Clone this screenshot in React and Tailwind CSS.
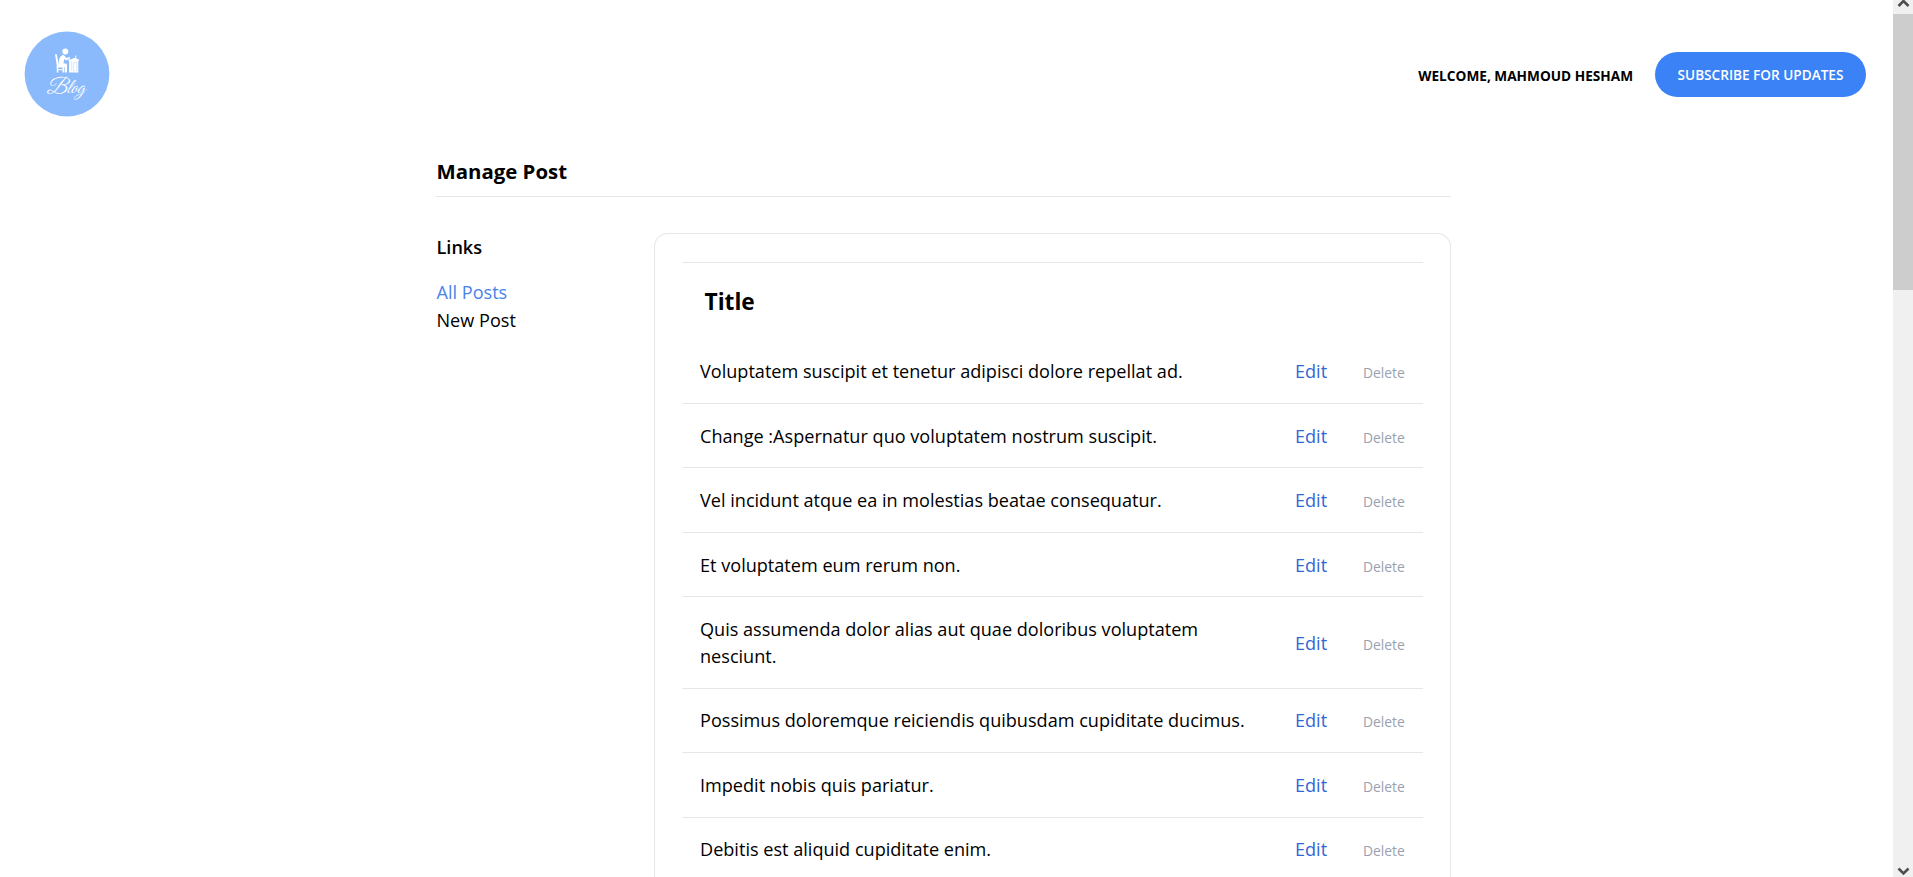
import React from "react";

const posts = [
  { title: "Voluptatem suscipit et tenetur adipisci dolore repellat ad.", height: "h-[65px]" },
  { title: "Change :Aspernatur quo voluptatem nostrum suscipit.", height: "h-[64px] pt-0.5" },
  { title: "Vel incidunt atque ea in molestias beatae consequatur.", height: "h-[65px]" },
  { title: "Et voluptatem eum rerum non.", height: "h-[64px] pt-0.5" },
  { title: "Quis assumenda dolor alias aut quae doloribus voluptatem nesciunt.", height: "h-[92px]", actions: "pt-0.5" },
  { title: "Possimus doloremque reiciendis quibusdam cupiditate ducimus.", height: "h-[64px]" },
  { title: "Impedit nobis quis pariatur.", height: "h-[65px]" },
  { title: "Debitis est aliquid cupiditate enim.", height: "h-[64px]" },
];

function Logo() {
  return (
    <svg className="block size-[86px]" viewBox="0 0 86 86" role="img" aria-label="Blog">
      <circle cx="43" cy="43" r="42.4" fill="#8bbafc" />
      <g fill="#fff">
        <circle cx="41.3" cy="20.6" r="3" />
        <path d="M38.3 24.2c-2.4 1-3.5 4-3.6 9.3 0 1.700.8 2.600 2.400 2.600h3.500v5.400h2.400v-7.400c0-1-.6-1.600-1.500-1.600h-2l.6-4.600 2.100 1.600 4-2.600-.7-1.200-2.900 1.500-2.200-2.500c-.6-.7-1.300-.8-2.100-.5z" />
        <path d="M31 23.200h1.700l2.300 11.400h-2.200zM32.600 34.600h7.400v2h-7.400zM32.800 36h1.500v5.600h-1.500zM38.500 36H40v5.600h-1.500zM33.500 38.300h5.500v1h-5.500z" />
        <path d="M44.300 28.200h10.800v1.500h-.8v11.900h-9.200V29.700h-.8zM51.300 24.500h1v3.700h-1zM48.700 27h4v1.200h-4z" />
      </g>
      <path d="M46.200 31.200h1.500v9M49.500 31.500h3.400v8.500h-3.400z" fill="none" stroke="#b8d5fd" strokeWidth=".5" />
      <text
        x="22.5"
        y="61.5"
        fill="#fff"
        fontFamily="'Z003', 'URW Chancery L', 'Great Vibes', 'Liberation Serif', cursive"
        fontStyle="italic"
        fontSize="21"
        textLength="38"
        lengthAdjust="spacingAndGlyphs"
      >
        Blog
      </text>
    </svg>
  );
}

function PostRow({ title, height, actions = "" }) {
  return (
    <div className={`flex ${height} shrink-0 items-center border-b border-gray-200`}>
      <div className="w-[595px] pl-[18px] pr-[18px] text-black">{title}</div>
      <div className={`flex items-center ${actions}`}>
        <a href="#" className="w-[68px] pl-[18px] text-[#3267d6]">Edit</a>
        <button className="pl-[18px] pt-[3px] text-[13.8px] leading-5 text-gray-400">Delete</button>
      </div>
    </div>
  );
}

function Scrollbar() {
  return (
    <div className="flex w-5 shrink-0 flex-col bg-[#f0f0f0]">
      <div className="flex h-[14px] justify-center overflow-hidden">
        <svg className="h-[14px] w-5" viewBox="0 0 20 14" fill="none" stroke="#505050" strokeWidth="2.6">
          <path d="M5.500 6 10.500 1l5 5" />
        </svg>
      </div>
      <div className="h-[276px] bg-[#cdcdcd]" />
      <div className="flex-1" />
      <svg className="h-[14px] w-5" viewBox="0 0 20 14" fill="none" stroke="#505050" strokeWidth="2.6">
        <path d="m5.500 5.500 5 5 5-5" />
      </svg>
    </div>
  );
}

export default function App() {
  return (
    <div className="flex h-[877px] overflow-hidden bg-white font-['Open_Sans',sans-serif] text-[18.1px] leading-[27px] text-black">
      <div className="flex min-w-0 flex-1 flex-col">
        <header className="flex h-[149px] shrink-0 items-center justify-between pl-6 pr-[27px]">
          <a href="#" className="pb-0.5"><Logo /></a>
          <div className="flex items-center">
            <span className="pt-[3px] text-[13.65px] font-bold uppercase leading-[18px]">Welcome, Mahmoud Hesham</span>
            <a href="#" className="ml-[22px] flex h-[45px] w-[211px] items-center justify-center rounded-full bg-[#3b82f6] text-[13.6px] font-semibold uppercase leading-[18px] text-white">
              Subscribe for Updates
            </a>
          </div>
        </header>

        <main className="ml-[436px] flex min-h-0 w-[1015px] flex-1 flex-col">
          <h1 className="h-[48px] shrink-0 border-b border-gray-200 pl-[0.5px] pt-[9px] text-[20.4px] font-bold">Manage Post</h1>
          <div className="flex min-h-0 flex-1 pt-9">
            <aside className="w-[218px] shrink-0 pl-[0.5px] pt-px">
              <h4 className="mb-[18px] font-semibold">Links</h4>
              <ul className="flex flex-col gap-px">
                <li><a href="#" className="text-[#4a83ec]">All Posts</a></li>
                <li><a href="#">New Post</a></li>
              </ul>
            </aside>
            <section className="flex h-[800px] flex-1 flex-col rounded-t-[14px] border border-b-0 border-gray-200 px-[27px] pt-[28px]">
              <div className="h-[77px] shrink-0 border-t border-gray-200 pl-[22.5px] pt-[25px] text-[22.7px] font-bold">Title</div>
              {posts.map((post) => (
                <PostRow key={post.title} {...post} />
              ))}
            </section>
          </div>
        </main>
      </div>
      <Scrollbar />
    </div>
  );
}
